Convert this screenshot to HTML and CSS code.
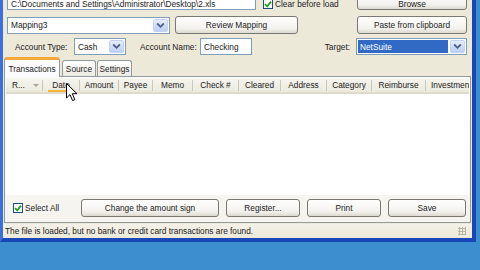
FILE: index.html
```html
<!DOCTYPE html>
<html lang="en">
<head>
    <meta charset="UTF-8">
    <title>Import transactions</title>
    <link rel="stylesheet" href="styles.css">
</head>
<body>
    <div class="window">
        <div class="row row-file">
            <div class="field path">C:\Documents and Settings\Administrator\Desktop\2.xls</div>
            <label class="check clear">
                <span class="box"><svg width="8" height="8" viewBox="0 0 8 8"><path d="M1 4 L3.2 6.4 L7 1.6" fill="none" stroke="#21a121" stroke-width="1.7"/></svg></span>
                Clear before load
            </label>
            <button class="btn side browse">Browse</button>
        </div>

        <div class="row row-map">
            <div class="combo mapping">
                <span class="value">Mapping3</span>
                <span class="drop"><svg width="9" height="7" viewBox="0 0 9 7"><polyline points="1.2,1.5 4.5,4.8 7.8,1.5" fill="none" stroke="#4d6185" stroke-width="1.8"/></svg></span>
            </div>
            <button class="btn review">Review Mapping</button>
            <button class="btn side">Paste from clipboard</button>
        </div>

        <div class="row row-acct">
            <span class="lbl type-lbl">Account Type:</span>
            <div class="combo cash">
                <span class="value">Cash</span>
                <span class="drop"><svg width="9" height="7" viewBox="0 0 9 7"><polyline points="1.2,1.5 4.5,4.8 7.8,1.5" fill="none" stroke="#4d6185" stroke-width="1.8"/></svg></span>
            </div>
            <span class="lbl name-lbl">Account Name:</span>
            <div class="field acct-name">Checking</div>
            <span class="lbl target-lbl">Target:</span>
            <div class="combo target">
                <span class="value selected">NetSuite</span>
                <span class="drop"><svg width="9" height="7" viewBox="0 0 9 7"><polyline points="1.2,1.5 4.5,4.8 7.8,1.5" fill="none" stroke="#4d6185" stroke-width="1.8"/></svg></span>
            </div>
        </div>

        <div class="tabs">
            <div class="tab active">Transactions</div>
            <div class="tab source">Source</div>
            <div class="tab settings">Settings</div>
        </div>

        <div class="panel">
            <div class="grid">
                <div class="grid-head">
                    <div class="col c-r">R... <span class="sort"></span></div>
                    <div class="col c-date hot">Date</div>
                    <div class="col c-amount">Amount</div>
                    <div class="col c-payee">Payee</div>
                    <div class="col c-memo">Memo</div>
                    <div class="col c-check">Check #</div>
                    <div class="col c-cleared">Cleared</div>
                    <div class="col c-address">Address</div>
                    <div class="col c-category">Category</div>
                    <div class="col c-reimb">Reimburse</div>
                    <div class="col c-invest">Investment</div>
                </div>
                <div class="grid-body"></div>
            </div>

            <div class="actions">
                <label class="check">
                    <span class="box"><svg width="8" height="8" viewBox="0 0 8 8"><path d="M1 4 L3.2 6.4 L7 1.6" fill="none" stroke="#21a121" stroke-width="1.7"/></svg></span>
                    Select All
                </label>
                <div class="buttons">
                    <button class="btn sign">Change the amount sign</button>
                    <button class="btn register">Register...</button>
                    <button class="btn print">Print</button>
                    <button class="btn save">Save</button>
                </div>
            </div>
        </div>

        <div class="status">
            The file is loaded, but no bank or credit card transactions are found.
            <span class="grip"></span>
        </div>

        <!-- mouse pointer over the Date header -->
        <svg class="cursor" width="13" height="19" viewBox="0 0 13 19">
            <path d="M0.5 0.5 L0.5 15 L4 11.6 L6.6 17.6 L8.8 16.6 L6.3 10.7 L11 10.7 Z" fill="#fff" stroke="#000" stroke-width="1"/>
        </svg>
    </div>
</body>
</html>
```

FILE: styles.css
```css
* {
    box-sizing: border-box;
}

body {
    margin: 0;
    width: 480px;
    height: 270px;
    overflow: hidden;
    background-color: #3d8ecf;
    font-family: "Liberation Sans", Arial, sans-serif;
    font-size: 8.3px;
    color: #222;
}

.window {
    position: relative;
    width: 476px;
    height: 250px;
    margin-top: -8px;
    background-color: #ece9d8;
    border-left: 3px solid #3a6fdc;
    border-right: 4px solid #1a47b8;
    border-bottom: 4px solid #1a47b8;
    display: flex;
    flex-direction: column;
}

.row {
    display: flex;
    align-items: center;
    padding: 0 5px 0 4px;
}

.row-file {
    margin-top: 1px;
    height: 17px;
    align-items: flex-end;
}

.row-map {
    margin-top: 6px;
    height: 18px;
}

.row-acct {
    margin-top: 4px;
    height: 17px;
}

.field {
    height: 17px;
    background-color: #fff;
    border: 1px solid #7f9db9;
    padding: 0 3px;
    display: flex;
    align-items: center;
    white-space: nowrap;
    overflow: hidden;
}

.path {
    width: 249px;
    align-items: flex-end;
    padding-bottom: 0;
}

.check {
    display: flex;
    align-items: center;
    white-space: nowrap;
}

.clear {
    margin-left: 7px;
    margin-bottom: 1px;
}

.box {
    width: 10px;
    height: 10px;
    border: 1px solid #1c5180;
    background-color: #fff;
    margin-right: 2px;
    display: flex;
    align-items: center;
    justify-content: center;
}

.btn {
    font: inherit;
    color: inherit;
    height: 18px;
    padding: 0;
    border: 1px solid #7b7a72;
    border-radius: 3px;
    background: linear-gradient(#ffffff, #f3f2ee 70%, #dcdad0);
}

.side {
    width: 110px;
    margin-left: auto;
}

.browse {
    height: 17px;
    padding-top: 5px;
}

.combo {
    height: 17px;
    background-color: #fff;
    border: 1px solid #7f9db9;
    display: flex;
}

.combo .value {
    flex: 1;
    padding: 0 3px;
    display: flex;
    align-items: center;
    white-space: nowrap;
}

.combo .selected {
    margin: 1px;
    padding: 0 2px;
    background-color: #316ac5;
    color: #fff;
}

.drop {
    width: 15px;
    margin: 1px;
    border: 1px solid #c3d3f6;
    border-radius: 2px;
    background: linear-gradient(#e6eefd, #bdcdf3);
    display: flex;
    align-items: center;
    justify-content: center;
}

.mapping {
    width: 163px;
}

.review {
    width: 123px;
    margin-left: 5px;
}

.type-lbl {
    width: 59px;
    margin-left: 8px;
}

.cash {
    width: 52px;
}

.name-lbl {
    width: 60px;
    margin-left: 14px;
}

.acct-name {
    width: 52px;
}

.target-lbl {
    margin-left: auto;
    margin-right: 6px;
}

.target {
    width: 111px;
}

/* tabs */

.tabs {
    display: flex;
    align-items: flex-end;
    height: 19px;
    margin-top: 2px;
    padding-left: 1px;
}

.tab {
    height: 16px;
    border: 1px solid #919b9c;
    border-bottom: none;
    border-radius: 3px 3px 0 0;
    background: linear-gradient(#ffffff, #eceae2);
    display: flex;
    align-items: center;
    justify-content: center;
}

.tab.active {
    width: 56px;
    height: 20px;
    border-top: 3px solid #f5a93a;
    background: #fcfcfe;
    position: relative;
    z-index: 1;
    margin-bottom: -1px;
}

.source {
    width: 34px;
    margin-left: 2px;
}

.settings {
    width: 35px;
    margin-left: 1px;
}

.panel {
    height: 147px;
    margin: 0 1px;
    border: 1px solid #919b9c;
    background: linear-gradient(#fcfcfe, #f4f3ee);
    padding: 1px 1px 5px 1px;
    display: flex;
    flex-direction: column;
}

/* grid */

.grid {
    height: 117px;
    background-color: #fff;
    overflow: hidden;
}

.grid-head {
    display: flex;
    height: 16px;
    background: linear-gradient(#f6f5f0, #ebeadb);
    border-bottom: 2px solid #dedbcc;
}

.col {
    flex: none;
    display: flex;
    align-items: center;
    justify-content: center;
    white-space: nowrap;
}

.col + .col {
    border-left: 1px solid;
    border-image: linear-gradient(transparent 3px, #c9c7b6 3px, #c9c7b6 12px, transparent 12px) 1;
}

.c-r {
    width: 36px;
    justify-content: flex-start;
    padding-left: 6px;
}

.sort {
    margin-left: 8px;
    border-left: 3px solid transparent;
    border-right: 3px solid transparent;
    border-top: 3px solid #aaa79c;
}

.hot {
    background: linear-gradient(#f7b23c, #f7b23c) no-repeat 5px 100% / 19px 2px;
}

.c-date { width: 37px; }
.c-amount { width: 39px; }
.c-payee { width: 34px; }
.c-memo { width: 40px; }
.c-check { width: 46px; }
.c-cleared { width: 42px; }
.c-address { width: 46px; }
.c-category { width: 45px; }
.c-reimb { width: 54px; }

.c-invest {
    width: 60px;
    justify-content: flex-start;
    padding-left: 5px;
}

/* bottom buttons */

.actions {
    display: flex;
    align-items: center;
    height: 18px;
    margin-top: 4px;
    padding: 0 3px 0 7px;
}

.buttons {
    display: flex;
    gap: 7px;
    margin-left: auto;
}

.sign { width: 138px; }
.register { width: 74px; }
.print { width: 74px; }
.save { width: 78px; }

.status {
    height: 14px;
    margin-top: 1px;
    padding: 0 2px;
    display: flex;
    align-items: center;
    white-space: nowrap;
    background: linear-gradient(#f4f2e8, #ece9d8);
}

.grip {
    width: 8px;
    height: 8px;
    margin-left: auto;
    margin-right: 4px;
    background: radial-gradient(circle, #b8b5a6 1px, transparent 1.2px) 0 0 / 3px 3px;
}

.cursor {
    position: absolute;
    left: 63px;
    top: 91px;
    z-index: 5;
}
```
